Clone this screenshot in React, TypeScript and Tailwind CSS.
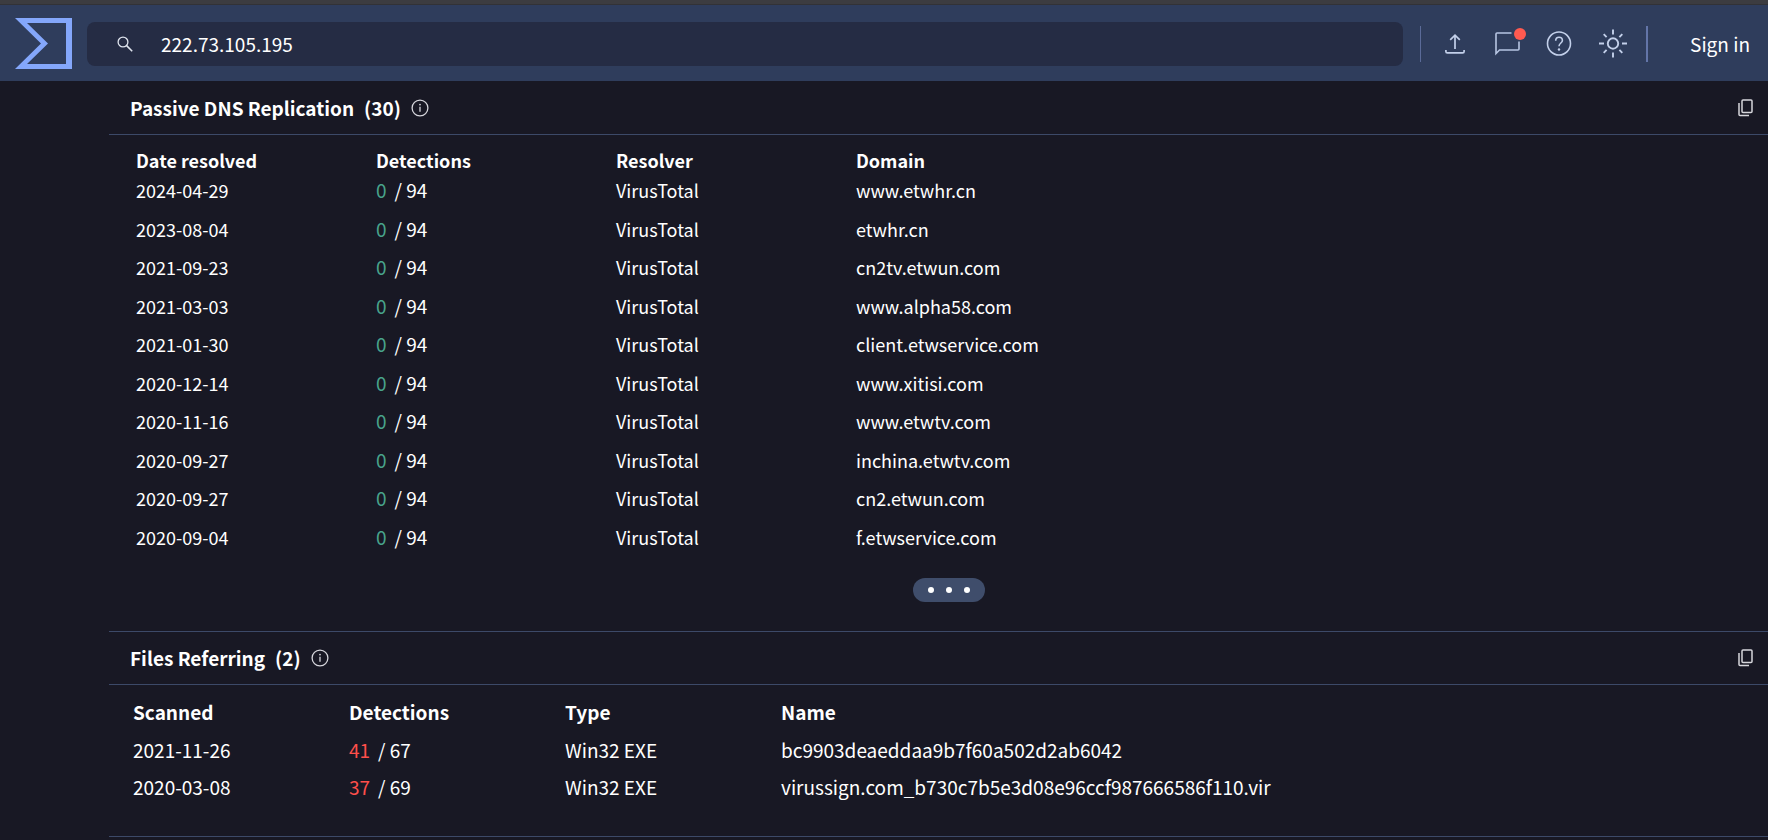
import React from "react";
import clsx from "clsx";

const dnsRecords = [
  { date: "2024-04-29", domain: "www.etwhr.cn" },
  { date: "2023-08-04", domain: "etwhr.cn" },
  { date: "2021-09-23", domain: "cn2tv.etwun.com" },
  { date: "2021-03-03", domain: "www.alpha58.com" },
  { date: "2021-01-30", domain: "client.etwservice.com" },
  { date: "2020-12-14", domain: "www.xitisi.com" },
  { date: "2020-11-16", domain: "www.etwtv.com" },
  { date: "2020-09-27", domain: "inchina.etwtv.com" },
  { date: "2020-09-27", domain: "cn2.etwun.com" },
  { date: "2020-09-04", domain: "f.etwservice.com" },
];

const files = [
  { date: "2021-11-26", hits: 41, total: 67, type: "Win32 EXE", name: "bc9903deaeddaa9b7f60a502d2ab6042" },
  {
    date: "2020-03-08",
    hits: 37,
    total: 69,
    type: "Win32 EXE",
    name: "virussign.com_b730c7b5e3d08e96ccf987666586f110.vir",
  },
];

function Logo() {
  return (
    <svg viewBox="0 0 57 52" className="h-[52px] w-[57px]" fill="#84a7fb" aria-hidden="true">
      <path fillRule="evenodd" d="M0 0H57V51H0L26 25.500ZM12 5L33 25.500L12 46H51V5Z" />
    </svg>
  );
}

function SearchIcon() {
  return (
    <svg viewBox="0 0 16 16" className="size-4 shrink-0" fill="none" stroke="#dfe4ee" strokeWidth="1.300" aria-hidden="true">
      <circle cx="6" cy="6" r="4.900" />
      <path d="M9.600 9.600L15.200 15.200" strokeWidth="1.600" />
    </svg>
  );
}

function UploadIcon() {
  return (
    <svg viewBox="0 0 20 20" className="size-5" fill="none" stroke="#c3d0ea" strokeWidth="1.700" aria-hidden="true">
      <path d="M10 15V1.500M5.200 5.800L10 1.200L14.800 5.800" />
      <path d="M.900 16V17.400Q.900 18.800 2.300 18.800H17.700Q19.100 18.800 19.100 17.400V16" />
    </svg>
  );
}

function CommentIcon() {
  return (
    <svg viewBox="0 0 25 24" className="h-6 w-[25px]" fill="none" stroke="#b7c5e2" strokeWidth="1.600" aria-hidden="true">
      <path d="M16.500 1H2Q1 1 1 2V21.500L4.500 18H23Q24 18 24 17V9.500" />
    </svg>
  );
}

function HelpIcon() {
  return (
    <svg viewBox="0 0 26 26" className="size-[26px]" fill="none" stroke="#c3d0ea" strokeWidth="1.600" aria-hidden="true">
      <circle cx="13" cy="12.500" r="11.500" />
      <path d="M9.700 9.800C9.700 7.500 11 6.300 13 6.300S16.400 7.700 16.400 9.500C16.400 12 13 12.100 13 15.300" />
      <circle cx="13" cy="18.500" r="1.200" fill="#c3d0ea" stroke="none" />
    </svg>
  );
}

function SunIcon() {
  return (
    <svg viewBox="0 0 30 30" className="size-[30px]" fill="none" stroke="#c3d0ea" strokeWidth="1.900" aria-hidden="true">
      <circle cx="15" cy="14.500" r="5.200" />
      <path d="M15 .500V5.500M15 23.500V28.500M1 14.500H6M24 14.500H29M5.700 5.200L8.600 8.100M21.400 20.900L24.300 23.800M5.700 23.800L8.600 20.900M21.400 8.100L24.300 5.200" />
    </svg>
  );
}

function InfoIcon() {
  return (
    <svg viewBox="0 0 18 18" className="size-[18px]" fill="none" stroke="#d6d6dc" strokeWidth="1.300" aria-hidden="true">
      <circle cx="9" cy="9" r="7.900" />
      <path d="M9 7.800V12.800" />
      <circle cx="9" cy="5.600" r=".900" fill="#d6d6dc" stroke="none" />
    </svg>
  );
}

function CopyIcon() {
  return (
    <svg viewBox="0 0 15 18" className="h-[18px] w-[15px]" fill="none" stroke="#d6d6dc" strokeWidth="1.500" aria-hidden="true">
      <rect x="4" y="1" width="10" height="12.500" rx="1" />
      <path d="M1 4V15.500Q1 16.500 2 16.500H11" />
    </svg>
  );
}

function SectionHeader({ title, count }: { title: string; count: number }) {
  return (
    <div className="flex h-[53px] items-center border-b border-[#3c4968] pr-[15px] pl-[21px]">
      <h2 className="flex gap-2.5 text-[19px] font-bold">
        <span>{title}</span>
        <span>({count})</span>
      </h2>
      <button className="ml-2.5" aria-label={`About ${title}`}>
        <InfoIcon />
      </button>
      <button className="ml-auto" aria-label={`Copy ${title}`}>
        <CopyIcon />
      </button>
    </div>
  );
}

function Detections({ hits, total }: { hits: number; total: number }) {
  return (
    <span className="flex gap-2 text-[19px] leading-6">
      <span className={clsx(hits > 0 ? "text-[#ff4f4b]" : "text-[#48a38b]")}>{hits}</span>
      <span>/ {total}</span>
    </span>
  );
}

export default function App() {
  return (
    <div className="min-h-screen bg-[#181824] font-['Noto_Sans_CJK_SC',sans-serif] leading-6 text-white">
      <div className="h-[5px] border-b border-[#323236] bg-[#3c3c40]" />
      <header className="flex h-[76px] items-center bg-[#2f3d5c] pt-0.5 pr-[18px] pl-[15px]">
        <a href="#" aria-label="Home">
          <Logo />
        </a>
        <label className="ml-[15px] flex h-11 flex-1 items-center gap-7 rounded-lg bg-[#252c44] pl-[30px]">
          <SearchIcon />
          <input
            type="text"
            defaultValue="222.73.105.195"
            aria-label="Search"
            className="w-full bg-transparent text-[19px] outline-none"
          />
        </label>
        <div className="ml-[17px] h-9 w-px bg-[#5b6b98]" />
        <div className="ml-6 flex items-center gap-[26px]">
          <button aria-label="Upload">
            <UploadIcon />
          </button>
          <button className="relative ml-1" aria-label="Notifications">
            <CommentIcon />
            <span className="absolute -top-1 -right-1.5 size-3 rounded-full bg-[#ff5a50]" />
          </button>
          <button aria-label="Help">
            <HelpIcon />
          </button>
          <button aria-label="Toggle theme">
            <SunIcon />
          </button>
        </div>
        <div className="ml-[18px] h-9 w-0.5 bg-[#6375a8]" />
        <a href="#" className="ml-[42px] text-[19px]">
          Sign in
        </a>
      </header>

      <main className="ml-[109px] pt-px">
        <section className="border-b border-[#3c4968]">
          <SectionHeader title="Passive DNS Replication" count={30} />
          <div className="pt-[13px] pr-1.5 pb-[29px] pl-[27px]">
            {/* the rows share out the height of the table */}
            <table className="h-[409px] w-full table-fixed text-left text-[18px]">
              <thead>
                <tr className="h-6">
                  <th className="w-60 font-bold">Date resolved</th>
                  <th className="w-60 font-bold">Detections</th>
                  <th className="w-60 font-bold">Resolver</th>
                  <th className="font-bold">Domain</th>
                </tr>
              </thead>
              <tbody className="align-top">
                {dnsRecords.map((r) => (
                  <tr key={r.domain}>
                    <td className="pt-1.5">{r.date}</td>
                    <td className="pt-1.5">
                      <Detections hits={0} total={94} />
                    </td>
                    <td className="pt-1.5">VirusTotal</td>
                    <td className="pt-1.5">{r.domain}</td>
                  </tr>
                ))}
              </tbody>
            </table>
            <div className="mt-[21px] flex justify-center">
              <button
                className="flex h-6 w-[72px] items-center justify-center gap-3 rounded-full bg-[#3f4d6b]"
                aria-label="Load more"
              >
                <span className="size-1.5 rounded-full bg-white" />
                <span className="size-1.5 rounded-full bg-white" />
                <span className="size-1.5 rounded-full bg-white" />
              </button>
            </div>
          </div>
        </section>

        <section className="border-b border-[#3c4968]">
          <SectionHeader title="Files Referring" count={2} />
          <div className="pt-2 pb-[31px] pl-6">
            <table className="w-full table-fixed text-left text-[19px]">
              <thead>
                <tr className="h-[38px]">
                  <th className="w-54 font-bold">Scanned</th>
                  <th className="w-54 font-bold">Detections</th>
                  <th className="w-54 font-bold">Type</th>
                  <th className="font-bold">Name</th>
                </tr>
              </thead>
              <tbody>
                {files.map((f) => (
                  <tr key={f.name} className="h-[37px]">
                    <td>{f.date}</td>
                    <td>
                      <Detections hits={f.hits} total={f.total} />
                    </td>
                    <td>{f.type}</td>
                    <td>{f.name}</td>
                  </tr>
                ))}
              </tbody>
            </table>
          </div>
        </section>
      </main>
    </div>
  );
}
